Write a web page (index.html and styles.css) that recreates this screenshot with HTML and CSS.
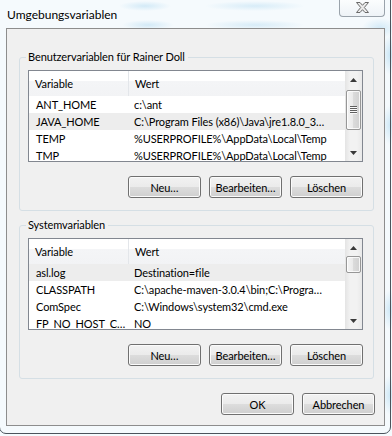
FILE: index.html
```html
<!DOCTYPE html>
<html lang="de">
<head>
  <meta charset="UTF-8">
  <title>Umgebungsvariablen</title>
  <link rel="stylesheet" href="styles.css">
</head>
<body>
  <div class="frame">
    <div class="titlebar">
      <span class="title">Umgebungsvariablen</span>
      <button class="close" type="button">
        <svg width="13" height="11" viewBox="-0.5 -0.5 13 11">
          <polygon points="0,0 3.5,0 6,2.8 8.5,0 12,0 7.8,5 12,10 8.5,10 6,7.2 3.5,10 0,10 4.2,5" fill="#ececec" stroke="#6a6a6a" stroke-width="1"/>
        </svg>
      </button>
    </div>

    <div class="client">
      <!-- Benutzervariablen -->
      <fieldset class="group">
        <legend>Benutzervariablen für Rainer Doll</legend>
        <div class="list">
          <div class="list-body">
            <div class="list-head">
              <div class="head-cell">Variable</div>
              <div class="head-cell">Wert</div>
            </div>
            <div class="row"><div class="cell">ANT_HOME</div><div class="cell value">c:\ant</div></div>
            <div class="row selected"><div class="cell">JAVA_HOME</div><div class="cell value">C:\Program Files (x86)\Java\jre1.8.0_3…</div></div>
            <div class="row"><div class="cell">TEMP</div><div class="cell value">%USERPROFILE%\AppData\Local\Temp</div></div>
            <div class="row"><div class="cell">TMP</div><div class="cell value">%USERPROFILE%\AppData\Local\Temp</div></div>
          </div>
          <div class="scrollbar">
            <div class="arrow"><svg width="7" height="4"><path d="M0 4L3.5 0L7 4Z" fill="#3a3a3a"/></svg></div>
            <div class="track"><div class="thumb thumb-user"><span class="grip"></span></div></div>
            <div class="arrow"><svg width="7" height="4"><path d="M0 0L3.5 4L7 0Z" fill="#3a3a3a"/></svg></div>
          </div>
        </div>
        <div class="buttons">
          <button class="btn" type="button">Neu…</button>
          <button class="btn" type="button">Bearbeiten…</button>
          <button class="btn" type="button">Löschen</button>
        </div>
      </fieldset>

      <!-- Systemvariablen -->
      <fieldset class="group group-system">
        <legend>Systemvariablen</legend>
        <div class="list">
          <div class="list-body">
            <div class="list-head">
              <div class="head-cell">Variable</div>
              <div class="head-cell">Wert</div>
            </div>
            <div class="row selected"><div class="cell">asl.log</div><div class="cell value">Destination=file</div></div>
            <div class="row"><div class="cell">CLASSPATH</div><div class="cell value">C:\apache-maven-3.0.4\bin;C:\Progra…</div></div>
            <div class="row"><div class="cell">ComSpec</div><div class="cell value">C:\Windows\system32\cmd.exe</div></div>
            <div class="row"><div class="cell">FP_NO_HOST_C…</div><div class="cell value">NO</div></div>
          </div>
          <div class="scrollbar">
            <div class="arrow"><svg width="7" height="4"><path d="M0 4L3.5 0L7 4Z" fill="#3a3a3a"/></svg></div>
            <div class="track"><div class="thumb thumb-system"></div></div>
            <div class="arrow"><svg width="7" height="4"><path d="M0 0L3.5 4L7 0Z" fill="#3a3a3a"/></svg></div>
          </div>
        </div>
        <div class="buttons">
          <button class="btn" type="button">Neu…</button>
          <button class="btn" type="button">Bearbeiten…</button>
          <button class="btn" type="button">Löschen</button>
        </div>
      </fieldset>

      <div class="dialog-buttons">
        <button class="btn" type="button">OK</button>
        <button class="btn" type="button">Abbrechen</button>
      </div>
    </div>
  </div>
</body>
</html>
```

FILE: styles.css
```css
body {
  margin: 0;
  width: 392px;
  height: 436px;
  overflow: hidden;
  font-family: Lato, "Liberation Sans", sans-serif;
  font-size: 11px;
  letter-spacing: -0.1px;
  color: #000;
  background-color: #f5fafd;
  background-image:
    radial-gradient(ellipse 26px 5px at 145px 6px, rgba(160,210,238,0.4), transparent),
    radial-gradient(ellipse 50px 5px at 255px 6px, rgba(160,210,238,0.35), transparent),
    radial-gradient(ellipse 26px 5px at 148px 25px, rgba(160,210,238,0.4), transparent),
    radial-gradient(ellipse 50px 5px at 255px 25px, rgba(160,210,238,0.35), transparent),
    radial-gradient(ellipse 18px 10px at 380px 28px, rgba(160,210,238,0.4), transparent),
    radial-gradient(ellipse 8px 20px at 390px 55px, rgba(160,210,238,0.5), transparent),
    radial-gradient(ellipse 8px 20px at 390px 125px, rgba(160,210,238,0.45), transparent),
    radial-gradient(ellipse 8px 20px at 390px 310px, rgba(160,210,238,0.45), transparent),
    radial-gradient(ellipse 8px 20px at 390px 395px, rgba(160,210,238,0.45), transparent);
}
.frame {
  box-sizing: border-box;
  width: 392px;
  height: 442px;
  margin: -8px 0 0 -1px;
  border: 1px solid #4b545c;
  border-radius: 0 0 7px 7px;
}
.titlebar {
  display: flex;
  align-items: flex-start;
  height: 35px;
}
.title {
  margin: 14px 0 0 7px;
  line-height: 16px;
  font-size: 12px;
  letter-spacing: 0;
}
.close {
  display: flex;
  align-items: center;
  justify-content: center;
  margin: 6px 5px 0 auto;
  width: 46px;
  height: 18px;
  padding: 0;
  border: 1px solid #9aa3ab;
  border-top: none;
  border-radius: 0 0 4px 4px;
  background: linear-gradient(rgba(255,255,255,0.7), rgba(235,240,244,0.7));
}
.client {
  box-sizing: border-box;
  width: 379px;
  height: 398px;
  margin-left: 6px;
  padding: 0 9px 0 12px;
  border: 1px solid #8d8d8d;
  background: #f0f0f0;
}
.group {
  box-sizing: border-box;
  width: 355px;
  margin: 20px 0 0 0;
  padding: 5px 10px 12px 8px;
  border: 1px solid #d5dfe5;
  border-radius: 3px;
}
.group-system {
  margin-top: 6px;
}
legend {
  margin-left: -2px;
  padding: 0 3px 0 2px;
  line-height: 16px;
}
.list {
  display: flex;
  box-sizing: border-box;
  height: 92px;
  border: 1px solid #828790;
  background: #fff;
}
.list-body {
  flex: 1;
  overflow: hidden;
}
.list-head {
  display: grid;
  grid-template-columns: 100px 1fr;
  height: 25px;
  background: linear-gradient(#fff 0, #fff 10px, #f4f5f7 10px, #f2f3f5 100%);
}
.head-cell {
  line-height: 25px;
  padding-left: 6px;
}
.head-cell:first-child {
  border-right: 1px solid #e3e6ea;
}
.row {
  display: grid;
  grid-template-columns: 100px 1fr;
  height: 17px;
  line-height: 17px;
}
.row.selected {
  background: #ededed;
}
.cell {
  padding-left: 7px;
  white-space: nowrap;
  overflow: hidden;
}
.cell.value {
  padding-left: 5px;
}
.scrollbar {
  display: flex;
  flex-direction: column;
  width: 17px;
  background: linear-gradient(to right, #e4e4e4, #f2f2f2 30%, #f2f2f2 70%, #e9e9e9);
}
.arrow {
  display: flex;
  align-items: center;
  justify-content: center;
  height: 17px;
}
.track {
  flex: 1;
}
.thumb {
  display: flex;
  align-items: center;
  justify-content: center;
  box-sizing: border-box;
  width: 15px;
  margin-left: 1px;
  border: 1px solid #979797;
  border-radius: 2px;
  background: linear-gradient(to right, #f4f4f4, #e9e9e9 50%, #dbdbdb 50%, #d0d0d0);
  box-shadow: inset 0 0 0 1px rgba(255,255,255,0.8);
}
.thumb-user {
  height: 40px;
  margin-top: 2px;
}
.thumb-system {
  height: 17px;
}
.grip {
  width: 7px;
  height: 8px;
  background: repeating-linear-gradient(#5f5f5f 0, #5f5f5f 1px, #fafafa 1px, #fafafa 2px);
}
.buttons {
  display: flex;
  justify-content: flex-end;
  gap: 8px;
  margin-top: 14px;
}
.dialog-buttons {
  display: flex;
  justify-content: flex-end;
  gap: 8px;
  margin-top: 14px;
}
.btn {
  width: 73px;
  height: 22px;
  padding: 0;
  font: inherit;
  letter-spacing: inherit;
  color: #000;
  border: 1px solid #707070;
  border-radius: 3px;
  background: linear-gradient(#f2f2f2 0%, #ebebeb 50%, #dddddd 50%, #cfcfcf 100%);
  box-shadow: inset 0 0 0 1px #fbfbfb;
}
```
